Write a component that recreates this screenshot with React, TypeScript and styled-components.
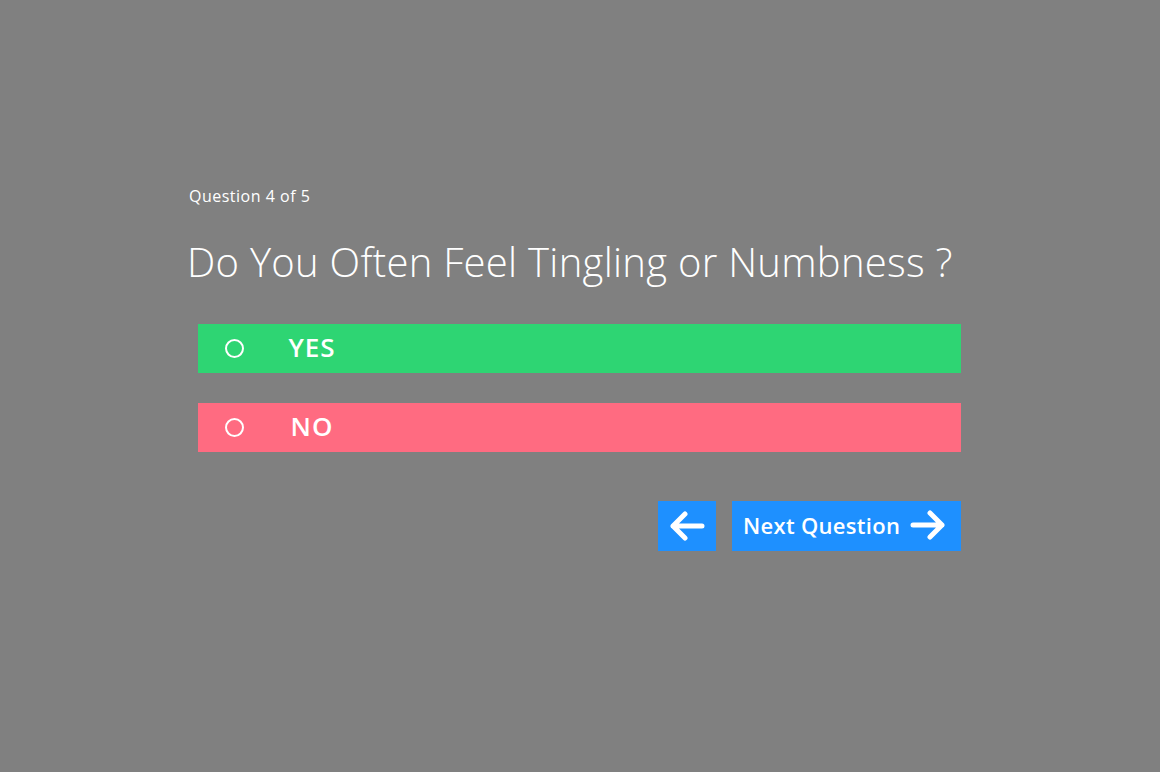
import * as React from 'react';
import styled, { createGlobalStyle } from 'styled-components';

const GlobalStyle = createGlobalStyle`
  html, body {
    margin: 0;
    padding: 0;
    background: #808080;
  }
  body {
    font-family: "Open Sans", "Noto Sans", sans-serif;
    color: #ffffff;
  }
`

const Page = styled.div`
  min-height: 772px;
  padding-top: 185px;
  box-sizing: border-box;
`
const Quiz = styled.div`
  width: 763px;
  margin-left: 198px;
`
const Counter = styled.div`
  margin-left: -9px;
  font-size: 16px;
  line-height: 22px;
  letter-spacing: 0.5px;
`
const Title = styled.h1`
  margin: 28px 0 0 -11px;
  font-weight: 300;
  font-size: 40px;
  line-height: 54px;
  letter-spacing: 0.28px;
  white-space: nowrap;
`
const Options = styled.div`
  margin-top: 35px;
  display: flex;
  flex-direction: column;
  gap: 30px;
`
const Option = styled.label<{ $color: string }>`
  display: flex;
  align-items: center;
  height: 49px;
  background: ${p => p.$color};
  cursor: pointer;
`
const Radio = styled.span`
  width: 15px;
  height: 15px;
  margin-left: 27px;
  border: 2px solid #ffffff;
  border-radius: 50%;
`
const Answer = styled.span`
  width: 80px;
  margin-left: 28px;
  padding-bottom: 4px;
  text-align: center;
  font-weight: 600;
  font-size: 26px;
  letter-spacing: 1px;
`
const Nav = styled.div`
  margin-top: 49px;
  display: flex;
  justify-content: flex-end;
  gap: 16px;
`
const Button = styled.button`
  display: flex;
  align-items: center;
  height: 50px;
  border: none;
  background: #1e90ff;
  color: #ffffff;
  font-family: inherit;
  font-weight: 600;
  font-size: 22px;
  letter-spacing: 0.3px;
  cursor: pointer;
`
const BackBtn = styled(Button)`
  width: 58px;
  justify-content: center;
`
const NextBtn = styled(Button)`
  width: 229px;
  padding: 0 15px 3px 11px;
  justify-content: space-between;
`

const Arrow = ({ back }: { back?: boolean }) => (
  <svg width="36" height="30" viewBox="0 0 36 30" fill="none"
    stroke="#ffffff" strokeWidth="5" strokeLinecap="round" strokeLinejoin="round"
    style={back ? { transform: 'scaleX(-1)' } : undefined}>
    <path d="M3 15h29M20 3l12 12-12 12" />
  </svg>
)

const App = () => {
  return (
    <Page>
      <GlobalStyle />
      <Quiz>
        <Counter>Question 4 of 5</Counter>
        <Title>Do You Often Feel Tingling or Numbness ?</Title>
        <Options>
          <Option $color="#2ed573">
            <Radio />
            <Answer>YES</Answer>
          </Option>
          <Option $color="#ff6b81">
            <Radio />
            <Answer>NO</Answer>
          </Option>
        </Options>
        <Nav>
          <BackBtn type="button"><Arrow back /></BackBtn>
          <NextBtn type="button">Next Question <Arrow /></NextBtn>
        </Nav>
      </Quiz>
    </Page>
  )
}
export default App
